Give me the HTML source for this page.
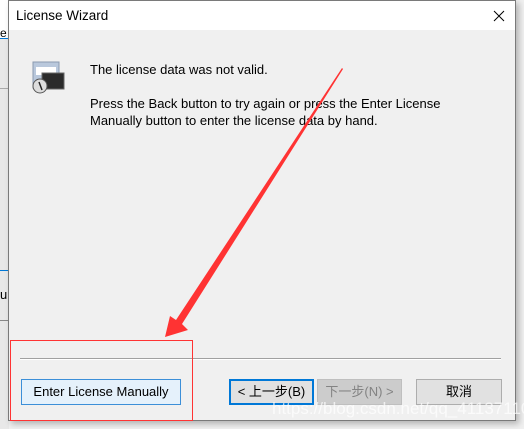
<!DOCTYPE html>
<html><head><style>
body{margin:0;width:524px;height:429px;background:#f0f0f0;position:relative;overflow:hidden;font-family:"Liberation Sans","Noto Sans CJK SC",sans-serif;font-size:13px;color:#000}
.a{position:absolute}
.btn{position:absolute;height:26px;box-sizing:border-box;border:1px solid #adadad;background:#e1e1e1;text-align:center;line-height:24px;font-size:13px}
</style></head><body>
<div class="a" style="left:0;top:0;width:9px;height:429px;background:#e8e8e8"></div>
<div class="a" style="left:0;top:0;width:9px;height:38px;background:#fff"></div>
<div class="a" style="left:0;top:38px;width:9px;height:1px;background:#0078d7"></div>
<div class="a" style="left:0;top:88px;width:9px;height:1px;background:#aaa"></div>
<div class="a" style="left:0;top:26px;font-size:12px;">e</div>
<div class="a" style="left:0;top:287px;">u</div>
<div class="a" style="left:0;top:270px;width:9px;height:1px;background:#0078d7"></div>
<div class="a" style="left:0;top:320px;width:9px;height:1px;background:#888"></div>
<div class="a" style="left:8px;top:0;width:508px;height:421px;border:1px solid #7a7a7a;box-sizing:border-box;background:#f0f0f0;box-shadow:3px 3px 6px rgba(0,0,0,.25)"></div>
<div class="a" style="left:9px;top:1px;width:506px;height:29px;background:#fff"></div>
<div class="a" style="left:16px;top:8px;font-size:13.5px">License Wizard</div>
<svg class="a" style="left:493px;top:10px" width="12" height="12"><path d="M1 1L11 11M11 1L1 11" stroke="#000" stroke-width="1"/></svg>
<svg class="a" style="left:30px;top:60px" width="36" height="36">
<rect x="3" y="2" width="26" height="26" fill="#b9c8dc" stroke="#8a9ab0"/>
<rect x="6" y="7" width="20" height="8" fill="#fff"/>
<rect x="12" y="13" width="22" height="16" fill="#2b2b2b" stroke="#666"/>
<circle cx="10" cy="26" r="7" fill="#ddd" stroke="#555"/>
<path d="M9 22 L12 30" stroke="#222" stroke-width="1.5"/>
</svg>
<div class="a" style="left:90px;top:62px">The license data was not valid.</div>
<div class="a" style="left:90px;top:95px;line-height:17px">Press the Back button to try again or press the Enter License<br>Manually button to enter the license data by hand.</div>
<div class="a" style="left:20px;top:358px;width:481px;height:1px;background:#a0a0a0"></div>
<div class="a" style="left:20px;top:359px;width:481px;height:1px;background:#fff"></div>
<div class="btn" style="left:21px;top:379px;width:160px;border-color:#3c8fd8;background:#e5f1fb">Enter License Manually</div>
<div class="btn" style="left:229px;top:379px;width:85px;border:2px solid #0078d7;line-height:22px">&lt; 上一步(B)</div>
<div class="btn" style="left:317px;top:379px;width:85px;background:#cccccc;border-color:#bfbfbf;color:#838383">下一步(N) &gt;</div>
<div class="btn" style="left:416px;top:379px;width:86px">取消</div>
<div class="a" style="left:10px;top:340px;width:183px;height:81px;border:1px solid #f33;box-sizing:border-box"></div>
<svg class="a" style="left:0;top:0" width="524" height="429">
<polygon points="342,68 343,69 182,324 188,330 165,337 170,316 176,320" fill="#f33"/>
</svg>
<div class="a" style="left:272px;top:399px;font-size:17px;color:rgba(255,255,255,.7)">https://blog.csdn.net/qq_41137110</div>
</body></html>
